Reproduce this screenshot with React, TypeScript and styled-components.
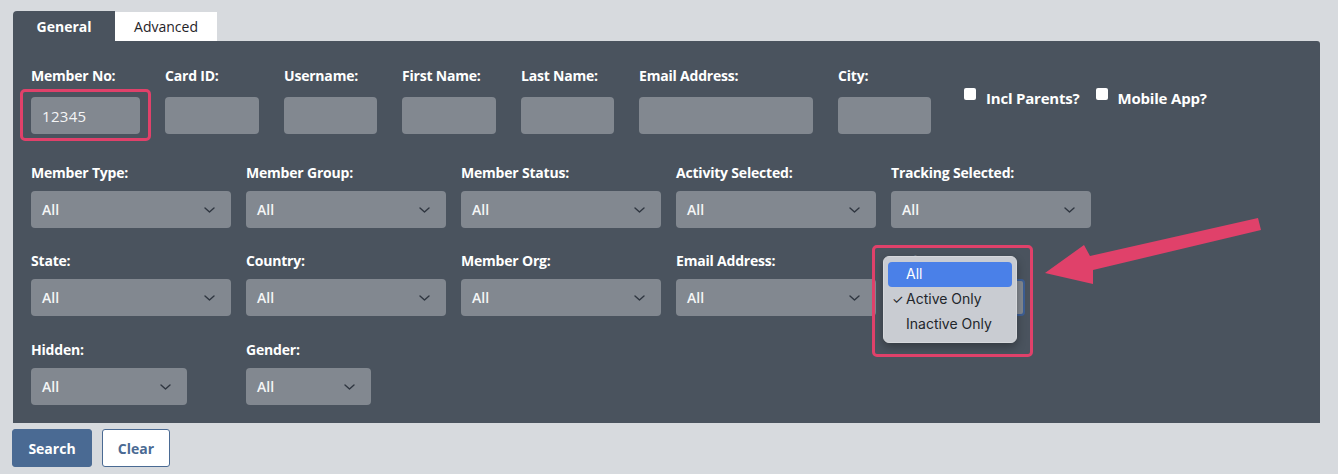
import React from 'react'
import styled, { createGlobalStyle } from 'styled-components'

const GlobalStyle = createGlobalStyle`
  html, body {
    margin: 0;
    padding: 0;
    background: #d7dade;
    font-family: "Open Sans", "Noto Sans", Arial, sans-serif;
  }
`

const Page = styled.div`
  position: relative;
  width: 1338px;
  height: 474px;
  padding: 11px 18px 0 13px;
  box-sizing: border-box;
  overflow: hidden;
`

const Tabs = styled.div`
  display: flex;
  align-items: flex-end;
  height: 30px;
`

const Tab = styled.div<{ $active?: boolean }>`
  width: 102px;
  height: ${(p) => (p.$active ? '30px' : '29px')};
  display: flex;
  align-items: center;
  justify-content: center;
  font-size: 14px;
  font-weight: ${(p) => (p.$active ? 700 : 400)};
  color: ${(p) => (p.$active ? '#ffffff' : '#1f2328')};
  background: ${(p) => (p.$active ? '#4a535e' : '#ffffff')};
  border-radius: ${(p) => (p.$active ? '4px 0 0 0' : '0')};
`

const Panel = styled.div`
  background: #4a535e;
  border-radius: 0 3px 0 0;
  padding: 27px 18px 18px;
  display: flex;
  flex-direction: column;
`

const Row = styled.div<{ $top?: number }>`
  display: flex;
  align-items: flex-start;
  margin-top: ${(p) => p.$top ?? 0}px;
`

const TextRow = styled(Row)`
  gap: 25px;
`

const SelectRow = styled(Row)`
  gap: 15px;
`

const Field = styled.div<{ $width?: number }>`
  position: relative;
  display: flex;
  flex-direction: column;
  width: ${(p) => (p.$width ? `${p.$width}px` : 'auto')};
`

const Label = styled.label<{ $gap?: number; $faded?: boolean }>`
  display: block;
  height: 16px;
  line-height: 16px;
  font-size: 14px;
  font-weight: 700;
  letter-spacing: -0.2px;
  color: ${(p) => (p.$faded ? '#6f7882' : '#ffffff')};
  margin-bottom: ${(p) => p.$gap ?? 10}px;
  white-space: nowrap;
`

const TextInput = styled.div<{ $width: number }>`
  width: ${(p) => p.$width}px;
  height: 37px;
  box-sizing: border-box;
  background: #828890;
  border-radius: 4px;
  padding: 0 11px;
  display: flex;
  align-items: center;
  font-size: 15px;
  letter-spacing: 0.3px;
  color: #f4f5f6;
`

const SelectBox = styled.div<{ $width: number; $focused?: boolean }>`
  width: ${(p) => p.$width}px;
  height: 37px;
  box-sizing: border-box;
  background: #828890;
  border-radius: 4px;
  border: ${(p) => (p.$focused ? '2px solid #3d5f95' : 'none')};
  padding: 0 16px 0 11px;
  display: flex;
  align-items: center;
  justify-content: space-between;
  font-size: 14px;
  font-weight: 600;
  color: #f4f5f6;
`

const Highlight = styled.div<{ $l: number; $t: number; $w: number; $h: number }>`
  position: absolute;
  left: ${(p) => p.$l}px;
  top: ${(p) => p.$t}px;
  width: ${(p) => p.$w}px;
  height: ${(p) => p.$h}px;
  box-sizing: border-box;
  border: 3px solid #e0416a;
  border-radius: 5px;
  pointer-events: none;
  z-index: 3;
`

const CheckGroup = styled.div`
  display: flex;
  align-items: center;
  margin-left: 8px;
  margin-top: 20px;
`

const CheckItem = styled.div`
  display: flex;
  align-items: center;
  gap: 10px;
  margin-right: 16px;
  font-size: 15px;
  font-weight: 700;
  letter-spacing: -0.2px;
  color: #ffffff;
`

const CheckBox = styled.span`
  display: inline-block;
  width: 12px;
  height: 12px;
  background: #ffffff;
  border-radius: 2px;
  position: relative;
  top: -4px;
`

const Menu = styled.div`
  position: absolute;
  left: -8px;
  top: 3px;
  width: 134px;
  box-sizing: border-box;
  padding: 5px 4px;
  background: #c9ccd2;
  border: 1px solid #d6d8dc;
  border-radius: 6px;
  box-shadow: 0 4px 10px rgba(0, 0, 0, 0.3);
  z-index: 2;
  font-family: Inter, "Liberation Sans", Arial, sans-serif;
`

const MenuItem = styled.div<{ $selected?: boolean }>`
  position: relative;
  height: 25px;
  line-height: 24px;
  padding-left: 18px;
  font-size: 14px;
  border-radius: 4px;
  color: ${(p) => (p.$selected ? '#ffffff' : '#22262b')};
  background: ${(p) => (p.$selected ? '#4a80e8' : 'transparent')};
`

const Check = styled.span`
  position: absolute;
  left: 4px;
  top: 0;
  font-size: 13px;
`

const Actions = styled.div`
  display: flex;
  gap: 10px;
  margin-top: 6px;
  margin-left: -1px;
`

const Button = styled.button<{ $primary?: boolean }>`
  height: 38px;
  padding: 0 12px;
  min-width: ${(p) => (p.$primary ? '80px' : '68px')};
  box-sizing: border-box;
  border-radius: 3px;
  border: 1px solid #4a6a93;
  background: ${(p) => (p.$primary ? '#4a6a93' : '#ffffff')};
  color: ${(p) => (p.$primary ? '#ffffff' : '#4a6a93')};
  font-family: "Open Sans", "Noto Sans", Arial, sans-serif;
  font-size: 14px;
  font-weight: 700;
`

const Overlay = styled.svg`
  position: absolute;
  left: 0;
  top: 0;
  pointer-events: none;
  z-index: 5;
`

const Chevron = () => (
  <svg width="11" height="6" viewBox="0 0 11 6" fill="none">
    <polyline points="1,1 5.5,5 10,1" stroke="#2f3640" strokeWidth="1.4" strokeLinecap="round" strokeLinejoin="round" />
  </svg>
)

const Select = ({ width, focused }: { width: number; focused?: boolean }) => (
  <SelectBox $width={width} $focused={focused}>
    <span>All</span>
    {!focused && <Chevron />}
  </SelectBox>
)

const textFields = [
  { label: 'Member No:', width: 109, value: '12345' },
  { label: 'Card ID:', width: 94 },
  { label: 'Username:', width: 93 },
  { label: 'First Name:', width: 94 },
  { label: 'Last Name:', width: 93 },
  { label: 'Email Address:', width: 174 },
  { label: 'City:', width: 93 },
]

const App: React.FC = () => {
  return (
    <>
      <GlobalStyle />
      <Page>
        <Tabs>
          <Tab $active>General</Tab>
          <Tab>Advanced</Tab>
        </Tabs>
        <Panel>
          <TextRow>
            {textFields.map((f, i) => (
              <Field key={f.label}>
                <Label $gap={13}>{f.label}</Label>
                <TextInput $width={f.width}>{f.value}</TextInput>
                {i === 0 && <Highlight $l={-11} $t={21} $w={131} $h={52} />}
              </Field>
            ))}
            <CheckGroup>
              <CheckItem>
                <CheckBox />
                Incl Parents?
              </CheckItem>
              <CheckItem>
                <CheckBox />
                Mobile App?
              </CheckItem>
            </CheckGroup>
          </TextRow>

          <SelectRow $top={31}>
            {['Member Type:', 'Member Group:', 'Member Status:', 'Activity Selected:', 'Tracking Selected:'].map((l) => (
              <Field key={l} $width={200}>
                <Label>{l}</Label>
                <Select width={200} />
              </Field>
            ))}
          </SelectRow>

          <SelectRow $top={25}>
            {['State:', 'Country:', 'Member Org:', 'Email Address:'].map((l) => (
              <Field key={l} $width={200}>
                <Label>{l}</Label>
                <Select width={200} />
              </Field>
            ))}
            <Field $width={134}>
              <Label $faded>Active:</Label>
              <Select width={134} focused />
              <Menu>
                <MenuItem $selected>All</MenuItem>
                <MenuItem>
                  <Check>✓</Check>
                  Active Only
                </MenuItem>
                <MenuItem>Inactive Only</MenuItem>
              </Menu>
              <Highlight $l={-19} $t={-8} $w={161} $h={112} />
            </Field>
          </SelectRow>

          <SelectRow $top={26}>
            <Field $width={200}>
              <Label>Hidden:</Label>
              <Select width={156} />
            </Field>
            <Field $width={200}>
              <Label>Gender:</Label>
              <Select width={125} />
            </Field>
          </SelectRow>
        </Panel>
        <Actions>
          <Button $primary>Search</Button>
          <Button>Clear</Button>
        </Actions>
        <Overlay width="1338" height="474" viewBox="0 0 1338 474">
          <polygon
            points="1258,218 1090,256 1084,245 1045,273 1093,284 1093,270 1261,230"
            fill="#e0416a"
            strokeLinejoin="round"
          />
        </Overlay>
      </Page>
    </>
  )
}

export default App
